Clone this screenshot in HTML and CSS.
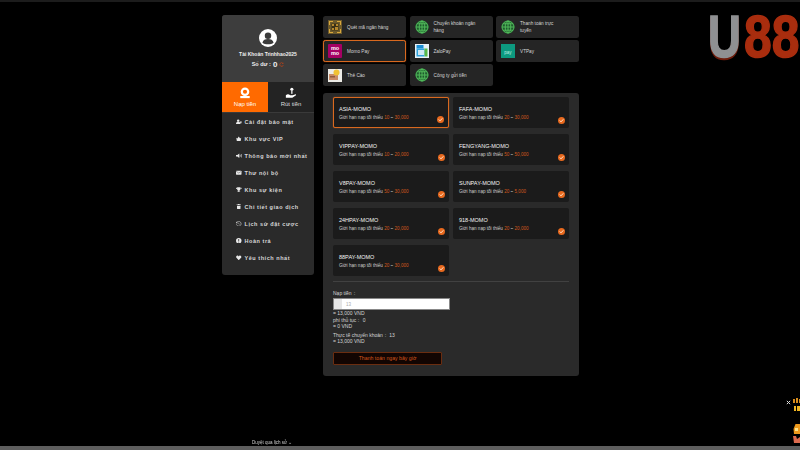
FILE: index.html
```html
<!DOCTYPE html>
<html lang="vi">
<head>
<meta charset="utf-8">
<title>Nạp tiền</title>
<link rel="stylesheet" href="styles.css">
</head>
<body>
<div class="topline"></div>
<div class="logo"><span class="logo-u">U</span><span class="logo-8">88</span></div>
<main class="page">
  <aside class="side">
    <section class="profile">
      <svg class="avatar" viewBox="0 0 20 20"><circle cx="10" cy="10" r="10" fill="#fff"/><circle cx="10" cy="7.4" r="3.6" fill="#3b3b3b"/><path d="M3.8 15.2c.6-3 3-4 6.2-4s5.600 1 6.200 4c-3 2.400-9.400 2.400-12.400 0z" fill="#3b3b3b"/></svg>
      <div class="account">Tài Khoản Trinhhao2025</div>
      <div class="balance">Số dư : <b>0</b> <svg class="refresh" viewBox="0 0 10 10"><path d="M8 3a3.600 3.600 0 1 0 .6 3" fill="none" stroke="#b4431a" stroke-width="1.600"/><path d="M8.800 .8v3h-3z" fill="#b4431a"/></svg></div>
    </section>
    <nav class="tabs">
      <div class="tab tab-on">
        <svg class="tab-ico" viewBox="0 0 14 14"><circle cx="7" cy="5.500" r="5" fill="#fff"/><circle cx="7" cy="5.500" r="2.400" fill="#ff6a00"/><rect x="1.500" y="10.500" width="11" height="2.500" fill="#fff"/></svg>
        <span>Nạp tiền</span>
      </div>
      <div class="tab">
        <svg class="tab-ico" viewBox="0 0 14 14"><circle cx="8" cy="2.600" r="1.800" fill="#fff"/><rect x="7.300" y="4" width="1.400" height="4" fill="#fff"/><path d="M1 9.500c2-1.500 3.500-1 5 0h3l3.500-1c.6.300.5 1 0 1.500l-4 2.500H1z" fill="#fff"/></svg>
        <span>Rút tiền</span>
      </div>
    </nav>
    <ul class="menu">
      <li><svg viewBox="0 0 10 10"><circle cx="4" cy="3" r="2.200"/><path d="M0 9c0-3 2-3.800 4-3.800S8 6 8 9zM8 4h2v3.500H7.500z"/></svg>Cài đặt bảo mật</li>
      <li><svg viewBox="0 0 10 10"><path d="M.5 3l2 1.500L5 1l2.500 3.500 2-1.500-1 6h-7z"/></svg>Khu vực VIP</li>
      <li><svg viewBox="0 0 10 10"><path d="M0 3.500h2.500L6 1v8L2.500 6.500H0zM7 3h1v4H7zM9 2h1v6H9z"/></svg>Thông báo mới nhất</li>
      <li><svg viewBox="0 0 10 10"><rect y="1.500" width="10" height="7" rx=".8"/><path d="M.5 2.500L5 5.500l4.500-3" fill="none" stroke="#2a2a2a" stroke-width=".7"/></svg>Thư nội bộ</li>
      <li><svg viewBox="0 0 10 10"><path d="M2 .5h6V4a3 3 0 0 1-2.300 2.800V8H7.500v1.500h-5V8h1.800V6.800A3 3 0 0 1 2 4zM0 1.500h1.500v2.200H0zM8.500 1.500H10v2.200H8.500z"/></svg>Khu sự kiện</li>
      <li><svg viewBox="0 0 10 10"><path d="M3.500 0h3v1H9v1H1V1h2.500zM1.700 3h6.600L8 10H2z"/></svg>Chi tiết giao dịch</li>
      <li><svg viewBox="0 0 10 10"><path d="M1.500 2.500A4.300 4.300 0 1 1 .8 6" fill="none" stroke="#e8e8e8" stroke-width="1"/><path d="M.5 1v3h3z"/><path d="M5 3v2.300l1.500 1" fill="none" stroke="#e8e8e8" stroke-width=".8"/></svg>Lịch sử đặt cược</li>
      <li><svg viewBox="0 0 10 10"><circle cx="5" cy="5" r="5"/><path d="M4.300 2h1.400v4H4.300zM4.300 6.800h1.400v1.300H4.300z" fill="#2a2a2a"/></svg>Hoàn trả</li>
      <li><svg viewBox="0 0 10 10"><path d="M5 9.500L.8 5.200C-.8 3 1.500-.2 3.500 1c.7.400 1.200 1 1.500 1.500.3-.5.800-1.100 1.500-1.500 2-1.200 4.300 2 2.700 4.200z"/></svg>Yêu thích nhất</li>
    </ul>
  </aside>

  <div class="content">
    <section class="methods">
      <div class="method">
        <svg class="m-ico" viewBox="0 0 14 14"><rect width="14" height="14" fill="#6d5a2b"/><path d="M1 1h4v1H2v3H1zM9 1h4v4h-1V2H9zM1 9h1v3h3v1H1zM12 9h1v4H9v-1h3z" fill="#d8a73c"/><rect x="3.500" y="3.500" width="7" height="7" fill="#3a3016"/><path d="M4 4h2v2H4zM8 4h2v2H8zM4 8h2v2H4zM7 7h3v3H7z" fill="#b4872e"/></svg>
        <span>Quét mã ngân hàng</span>
      </div>
      <div class="method">
        <svg class="m-ico" viewBox="0 0 14 14"><use href="#globe"/></svg>
        <span>Chuyển khoản ngân hàng</span>
      </div>
      <div class="method">
        <svg class="m-ico" viewBox="0 0 14 14"><use href="#globe"/></svg>
        <span>Thanh toán trực tuyến</span>
      </div>
      <div class="method method-on">
        <span class="m-ico momo"><span>mo</span><span>mo</span></span>
        <span>Momo Pay</span>
      </div>
      <div class="method">
        <svg class="m-ico" viewBox="0 0 14 14"><rect width="14" height="14" fill="#e9f3f8"/><rect x="1.500" y="1" width="7" height="3.500" fill="#1b8fd6"/><rect x="1.500" y="4.500" width="8" height="8" fill="#2fa3de"/><rect x="3" y="6" width="6" height="5" fill="#cfe9f5"/><rect x="9.500" y="4.500" width="3" height="8" fill="#58b947"/></svg>
        <span>ZaloPay</span>
      </div>
      <div class="method">
        <span class="m-ico vtpay">pay</span>
        <span>VTPay</span>
      </div>
      <div class="method">
        <svg class="m-ico" viewBox="0 0 14 14"><rect y="1" width="14" height="13" fill="#ecebe6"/><rect x="1" y="6" width="9" height="6" fill="#c98b66"/><circle cx="8.500" cy="4.500" r="3" fill="#f1c232"/><rect x="2" y="8" width="5" height="1.500" fill="#8f5a3d"/></svg>
        <span>Thẻ Cào</span>
      </div>
      <div class="method">
        <svg class="m-ico" viewBox="0 0 14 14"><use href="#globe"/></svg>
        <span>Công ty gửi tiền</span>
      </div>
    </section>

    <section class="panel">
      <div class="cards">
        <div class="card card-on"><h3>ASIA-MOMO</h3><p>Giới hạn nạp tối thiểu <em>10</em> ~ <em>30,000</em></p><svg class="tick" viewBox="0 0 10 10"><use href="#tick"/></svg></div>
        <div class="card"><h3>FAFA-MOMO</h3><p>Giới hạn nạp tối thiểu <em>20</em> ~ <em>30,000</em></p><svg class="tick" viewBox="0 0 10 10"><use href="#tick"/></svg></div>
        <div class="card"><h3>VIPPAY-MOMO</h3><p>Giới hạn nạp tối thiểu <em>10</em> ~ <em>20,000</em></p><svg class="tick" viewBox="0 0 10 10"><use href="#tick"/></svg></div>
        <div class="card"><h3>FENGYANG-MOMO</h3><p>Giới hạn nạp tối thiểu <em>50</em> ~ <em>50,000</em></p><svg class="tick" viewBox="0 0 10 10"><use href="#tick"/></svg></div>
        <div class="card"><h3>V8PAY-MOMO</h3><p>Giới hạn nạp tối thiểu <em>50</em> ~ <em>30,000</em></p><svg class="tick" viewBox="0 0 10 10"><use href="#tick"/></svg></div>
        <div class="card"><h3>SUNPAY-MOMO</h3><p>Giới hạn nạp tối thiểu <em>20</em> ~ <em>5,000</em></p><svg class="tick" viewBox="0 0 10 10"><use href="#tick"/></svg></div>
        <div class="card"><h3>24HPAY-MOMO</h3><p>Giới hạn nạp tối thiểu <em>20</em> ~ <em>20,000</em></p><svg class="tick" viewBox="0 0 10 10"><use href="#tick"/></svg></div>
        <div class="card"><h3>918-MOMO</h3><p>Giới hạn nạp tối thiểu <em>20</em> ~ <em>20,000</em></p><svg class="tick" viewBox="0 0 10 10"><use href="#tick"/></svg></div>
        <div class="card"><h3>88PAY-MOMO</h3><p>Giới hạn nạp tối thiểu <em>20</em> ~ <em>30,000</em></p><svg class="tick" viewBox="0 0 10 10"><use href="#tick"/></svg></div>
      </div>
      <div class="form">
        <div class="label">Nạp tiền：</div>
        <div class="input"><span class="addon"></span><span class="val">13</span></div>
        <div class="line">= 13,000 VND</div>
        <div class="line">phí thủ tục： 0</div>
        <div class="line">= 0 VND</div>
        <div class="line line-gap">Thực tế chuyển khoản： 13</div>
        <div class="line">= 13,000 VND</div>
        <button class="pay">Thanh toán ngay bây giờ</button>
      </div>
    </section>
  </div>
</main>

<div class="promo">
  <svg class="close" viewBox="0 0 6 6"><path d="M1 1l4 4M5 1L1 5" stroke="#ddd" stroke-width="1.200"/></svg>
  <svg class="promo-art" viewBox="0 0 7 46"><path d="M0 1h2v4H0zM3 0h2v5H3zM6 1h1v4H6z" fill="#d78c1c"/><path d="M1 8h2v5H1zM4 8h3v5H4z" fill="#f0b522"/><path d="M.5 31l2-5h4.500v10H1z" fill="#ef9a1c"/><path d="M2 30h3v3H2z" fill="#ffe38a"/><path d="M0 38h3l1 3 3-2v6H1z" fill="#dc6a4e"/></svg>
</div>
<footer class="foot">
  <div class="foot-text">Duyệt qua lịch sử ⌄</div>
  <div class="foot-bar"></div>
</footer>

<svg class="defs" width="0" height="0">
  <symbol id="globe" viewBox="0 0 14 14">
    <rect width="14" height="14" fill="#262626"/>
    <circle cx="7" cy="7" r="6.500" fill="#1e5b2d"/>
    <g fill="none" stroke="#56c15f" stroke-width=".9"><circle cx="7" cy="7" r="6"/><ellipse cx="7" cy="7" rx="2.800" ry="6"/><path d="M7 1v12M1 7h12M2 3.800h10M2 10.200h10"/></g>
  </symbol>
  <symbol id="tick" viewBox="0 0 10 10">
    <circle cx="5" cy="5" r="5" fill="#e8691e"/>
    <path d="M2.500 5l1.800 1.900 3.300-3.600" fill="none" stroke="#fff2e0" stroke-width="1.300"/>
  </symbol>
</svg>
</body>
</html>
```
FILE: styles.css
```css
* { box-sizing: border-box; }
html, body { margin: 0; height: 450px; overflow: hidden; }
body { background: #000; color: #e6e6e6; font-family: "Liberation Sans", Arial, sans-serif; font-size: 5px; }

.topline { position: fixed; left: 0; right: 0; top: 0; height: 2px; background: #1c1c1c; }

.page { display: flex; gap: 9px; justify-content: center; align-items: flex-start; padding-top: 15px; padding-left: 1px; }

/* sidebar */
.side { width: 92px; height: 260px; background: #2a2a2a; border-radius: 3px; overflow: hidden; flex: none; }
.profile { height: 67px; background: #3d3d3d; display: flex; flex-direction: column; align-items: center; padding-top: 14px; }
.avatar { width: 18px; height: 18px; }
.account { font-size: 5px; font-weight: 700; color: #f0f0f0; margin-top: 4px; line-height: 7px; }
.balance { font-size: 5.500px; color: #eee; margin-top: 2px; line-height: 9px; display: flex; align-items: center; gap: 2px; font-weight: 700; }
.balance b { font-size: 8px; }
.refresh { width: 5px; height: 5px; }

.tabs { display: flex; height: 31px; border-bottom: 1px solid #3a3a3a; }
.tab { flex: 1; display: flex; flex-direction: column; align-items: center; justify-content: center; gap: 2px; color: #ddd; font-size: 6px; background: #232323; }
.tab-on { background: #ff6a00; color: #fff; flex: 0 0 46px; }
.tab-ico { width: 12px; height: 12px; }

.menu { list-style: none; margin: 0; padding: 0; }
.menu li { height: 17px; display: flex; align-items: center; gap: 3px; padding-left: 14px; font-size: 5.500px; font-weight: 700; letter-spacing: .55px; color: #d8d8d8; white-space: nowrap; }
.menu svg { width: 5.500px; height: 5.500px; fill: #e8e8e8; flex: none; }

/* right column */
.content { width: 256px; flex: none; }
.methods { display: grid; grid-template-columns: 83px 83px 83px; column-gap: 3.500px; row-gap: 2px; grid-auto-rows: 22px; padding-top: 1px; }
.method { background: #252525; border-radius: 2.500px; display: flex; align-items: center; gap: 5px; padding: 0 16px 0 5px; font-size: 4.700px; line-height: 7px; color: #d8d8d8; }
.method-on { border: 1px solid #d9691f; box-shadow: 0 0 1px #d9691f; padding-left: 4px; }
.m-ico { width: 14px; height: 14px; flex: none; }
.momo { background: #a50064; color: #fff; display: flex; flex-direction: column; align-items: center; justify-content: center; font-size: 5.500px; line-height: 5px; font-weight: 700; border-radius: 1px; }
.vtpay { background: #0d9a80; color: #bfeee2; font-size: 4.500px; display: flex; align-items: flex-end; justify-content: center; padding-bottom: 2px; }

/* panel */
.panel { margin-top: 7px; height: 283px; background: #2a2a2a; border-radius: 3px; padding: 4px 10px 0; }
.cards { display: grid; grid-template-columns: 116px 116px; column-gap: 4px; row-gap: 6px; grid-auto-rows: 31px; padding-bottom: 5px; border-bottom: 1px solid #414141; }
.card { position: relative; background: #1b1b1b; border-radius: 2px; padding: 9px 0 0 6px; }
.card-on { border: 1px solid #d9691f; box-shadow: 0 0 1px #d9691f; padding: 8px 0 0 5px; }
.card h3 { margin: 0; font-size: 5.500px; line-height: 6px; font-weight: 400; color: #f5f5f5; }
.card p { margin: 3px 0 0; font-size: 4.600px; line-height: 6px; color: #cfcfcf; }
.card em { font-style: normal; color: #d2581c; }
.tick { position: absolute; right: 4px; bottom: 4px; width: 7px; height: 7px; }

.form { padding-top: 8px; font-size: 5px; color: #d4d4d4; }
.label { line-height: 6px; margin-bottom: 2px; }
.input { width: 117px; height: 12px; background: #fff; border: 1px solid #888; display: flex; align-items: center; }
.addon { width: 8px; height: 10px; background: #e6e6e6; }
.val { margin-left: 4px; color: #aaa; font-size: 4.500px; }
.line { line-height: 6.600px; }
.line-gap { margin-top: 2px; }
.pay { display: block; width: 109px; height: 13px; margin-top: 7px; padding: 0; background: #120502; border: 1px solid #6b2d10; border-radius: 1px; color: #d2581c; font: 5.200px "Liberation Sans", Arial, sans-serif; }

/* overlays */
.logo { position: fixed; left: 708px; top: 3px; width: 92px; display: flex; font: 700 60px/68px "Liberation Sans", Arial, sans-serif; white-space: nowrap; }
.logo-u { display: inline-block; width: 36px; transform: scaleX(.76); transform-origin: left center; color: #8f9092; -webkit-text-stroke: 1.500px #8f9092; filter: drop-shadow(0 2px 0 #6e1c0b); }
.logo-8 { display: inline-block; flex: none; width: 67px; transform: scaleX(.83); transform-origin: left center; color: #a92d0e; -webkit-text-stroke: 1.500px #a92d0e; }

.promo { position: fixed; right: 0; top: 398px; width: 16px; height: 46px; }
.close { position: absolute; left: 2px; top: 2px; width: 5px; height: 5px; }
.promo-art { position: absolute; right: 0; top: 0; width: 7px; height: 46px; }

.foot { position: fixed; left: 0; right: 0; bottom: 0; }
.foot-text { padding-left: 252px; font-size: 4.500px; line-height: 7px; color: #cfcfcf; }
.foot-bar { height: 4px; background: #5e5e5e; }
.defs { position: absolute; }
```
